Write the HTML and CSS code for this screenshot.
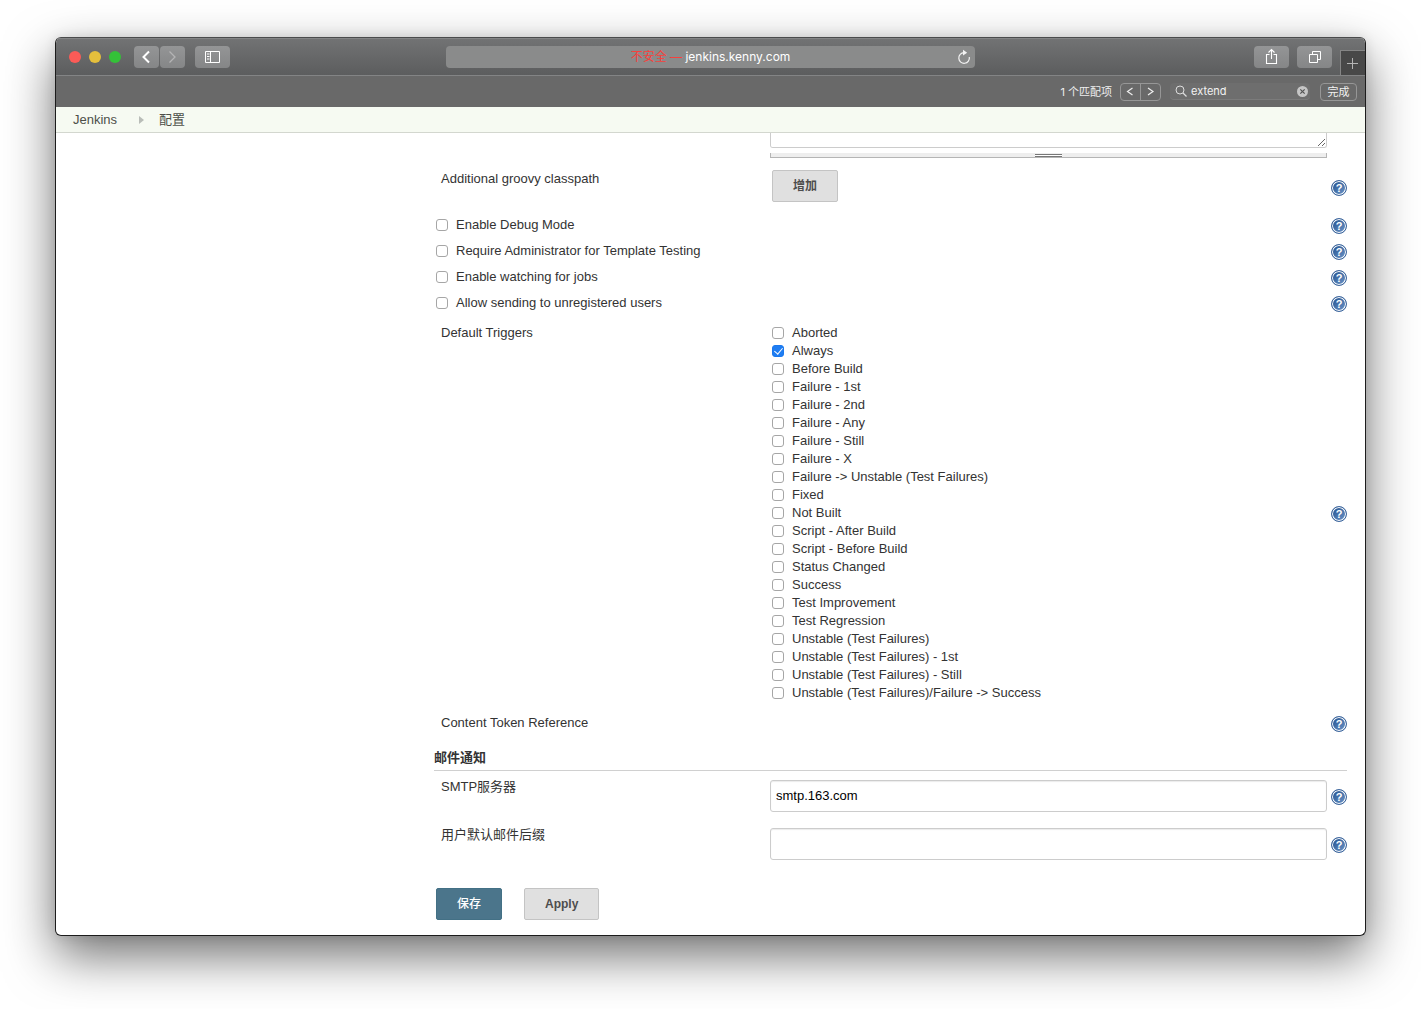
FILE: index.html
```html
<!DOCTYPE html>
<html lang="zh-CN">
<head>
<meta charset="utf-8">
<title>配置 [Jenkins]</title>
<meta name="viewport" content="width=device-width, initial-scale=1">
<link rel="stylesheet" href="styles.css">
</head>
<body>
<div class="window">
  <header class="toolbar">
    <div class="toolbar-side">
      <div class="lights">
        <span class="light light-close"></span>
        <span class="light light-min"></span>
        <span class="light light-max"></span>
      </div>
      <div class="nav">
        <button class="tool tool-nav" type="button" aria-label="后退">
          <svg width="24" height="22" viewBox="0 0 24 22"><path d="M15 5.500 9.500 11l5.500 5.500" fill="none" stroke="#fff" stroke-width="2"/></svg>
        </button>
        <button class="tool tool-nav" type="button" aria-label="前进">
          <svg width="24" height="22" viewBox="0 0 24 22"><path d="M9.500 5.500 15 11l-5.500 5.500" fill="none" stroke="#b4b4b5" stroke-width="1.300"/></svg>
        </button>
      </div>
      <button class="tool" type="button" aria-label="边栏">
        <svg width="35" height="22" viewBox="0 0 35 22"><path d="M10.500 5.500h14v11h-14zM15.500 5.500v11M12 8h2.500M12 10.500h2.500M12 13h2.500" fill="none" stroke="#fff"/></svg>
      </button>
    </div>
    <div class="address">
      <span class="address-text"><span class="insecure">不安全 —</span> jenkins.kenny.com</span>
      <button class="reload" type="button" aria-label="重新载入">
        <svg width="14" height="16" viewBox="0 0 14 16"><path d="M12.300 8A5.300 5.300 0 1 1 7 3.700" fill="none" stroke="#f2f2f2" stroke-width="1.200"/><path d="M6 .8 10.200 3.800 6 6.600z" fill="#f2f2f2"/></svg>
      </button>
    </div>
    <div class="toolbar-side toolbar-end">
      <button class="tool" type="button" aria-label="共享">
        <svg width="35" height="22" viewBox="0 0 35 22"><path d="M15.500 8.500h-3v9h10v-9h-3M17.500 13V4M14.500 6.500l3-3 3 3" fill="none" stroke="#fff" stroke-width="1.100"/></svg>
      </button>
      <button class="tool" type="button" aria-label="标签页概览">
        <svg width="35" height="22" viewBox="0 0 35 22"><path d="M12.500 8.500h8v8h-8zM15.500 8V5.500h8v8H21" fill="none" stroke="#fff"/></svg>
      </button>
      <button class="new-tab" type="button" aria-label="新建标签页">
        <svg width="23" height="24" viewBox="0 0 23 24"><path d="M6 12.500h11M11.500 7v11" stroke="#b5b5b5" fill="none"/></svg>
      </button>
    </div>
  </header>

  <div class="findbar">
    <span class="matches">1 个匹配项</span>
    <div class="find-steps">
      <button class="step" type="button" aria-label="上一个"><svg width="18" height="16" viewBox="0 0 18 16"><path d="M11.500 4 6.500 7.500l5 3.500" fill="none" stroke="#eee" stroke-width="1.200"/></svg></button>
      <button class="step" type="button" aria-label="下一个"><svg width="18" height="16" viewBox="0 0 18 16"><path d="M7 4l5 3.500-5 3.500" fill="none" stroke="#eee" stroke-width="1.200"/></svg></button>
    </div>
    <div class="find-field">
      <svg width="12" height="12" viewBox="0 0 12 12"><circle cx="5" cy="5" r="4" fill="none" stroke="#ddd"/><path d="M8 8l3.500 3.500" stroke="#ddd" stroke-width="1.200"/></svg>
      <input class="find-input" type="text" value="extend" aria-label="查找">
      <button class="clear" type="button" aria-label="清除"><svg width="11" height="11" viewBox="0 0 11 11"><circle cx="5.500" cy="5.500" r="5.500" fill="#c6c6c6"/><path d="M3.300 3.300l4.400 4.400M7.700 3.300 3.300 7.700" stroke="#555" stroke-width="1.200"/></svg></button>
    </div>
    <button class="done" type="button">完成</button>
  </div>

  <nav class="crumbs">
    <a class="crumb" href="#">Jenkins</a>
    <svg width="5" height="8" viewBox="0 0 5 8"><path d="M0 0l5 4-5 4z" fill="#b9bdb8"/></svg>
    <a class="crumb" href="#">配置</a>
  </nav>

  <main class="page">
    <form class="config">
      <div class="row">
        <div class="field script">
          <textarea class="script-box" aria-label="Default Pre-send Script"></textarea>
          <div class="grip-bar"><span class="grip"></span></div>
        </div>
      </div>
      <div class="row row-classpath">
        <span class="label">Additional groovy classpath</span>
        <div class="field field-inset"><button class="btn" type="button">增加</button></div>
        <a class="help" href="#" aria-label="帮助">?</a>
      </div>
      <div class="check-row"><label class="check"><input class="box" type="checkbox">Enable Debug Mode</label><a class="help" href="#" aria-label="帮助">?</a></div>
      <div class="check-row"><label class="check"><input class="box" type="checkbox">Require Administrator for Template Testing</label><a class="help" href="#" aria-label="帮助">?</a></div>
      <div class="check-row"><label class="check"><input class="box" type="checkbox">Enable watching for jobs</label><a class="help" href="#" aria-label="帮助">?</a></div>
      <div class="check-row"><label class="check"><input class="box" type="checkbox">Allow sending to unregistered users</label><a class="help" href="#" aria-label="帮助">?</a></div>
      <div class="row row-triggers">
        <span class="label" id="triggers">Default Triggers</span>
        <div class="field field-inset" role="group" aria-labelledby="triggers">
          <label class="check"><input class="box" type="checkbox">Aborted</label>
          <label class="check"><input class="box" type="checkbox" checked>Always</label>
          <label class="check"><input class="box" type="checkbox">Before Build</label>
          <label class="check"><input class="box" type="checkbox">Failure - 1st</label>
          <label class="check"><input class="box" type="checkbox">Failure - 2nd</label>
          <label class="check"><input class="box" type="checkbox">Failure - Any</label>
          <label class="check"><input class="box" type="checkbox">Failure - Still</label>
          <label class="check"><input class="box" type="checkbox">Failure - X</label>
          <label class="check"><input class="box" type="checkbox">Failure -&gt; Unstable (Test Failures)</label>
          <label class="check"><input class="box" type="checkbox">Fixed</label>
          <label class="check"><input class="box" type="checkbox">Not Built</label>
          <label class="check"><input class="box" type="checkbox">Script - After Build</label>
          <label class="check"><input class="box" type="checkbox">Script - Before Build</label>
          <label class="check"><input class="box" type="checkbox">Status Changed</label>
          <label class="check"><input class="box" type="checkbox">Success</label>
          <label class="check"><input class="box" type="checkbox">Test Improvement</label>
          <label class="check"><input class="box" type="checkbox">Test Regression</label>
          <label class="check"><input class="box" type="checkbox">Unstable (Test Failures)</label>
          <label class="check"><input class="box" type="checkbox">Unstable (Test Failures) - 1st</label>
          <label class="check"><input class="box" type="checkbox">Unstable (Test Failures) - Still</label>
          <label class="check"><input class="box" type="checkbox">Unstable (Test Failures)/Failure -&gt; Success</label>
        </div>
        <a class="help" href="#" aria-label="帮助">?</a>
      </div>
      <div class="row row-token">
        <span class="label">Content Token Reference</span>
        <a class="help" href="#" aria-label="帮助">?</a>
      </div>
      <h2 class="section">邮件通知</h2>
      <div class="row row-input">
        <label class="label" for="smtp">SMTP服务器</label>
        <input class="field text" id="smtp" type="text" value="smtp.163.com">
        <a class="help" href="#" aria-label="帮助">?</a>
      </div>
      <div class="row row-input">
        <label class="label" for="suffix">用户默认邮件后缀</label>
        <input class="field text" id="suffix" type="text">
        <a class="help" href="#" aria-label="帮助">?</a>
      </div>
      <div class="actions">
        <button class="btn btn-primary" type="submit">保存</button>
        <button class="btn" type="button">Apply</button>
      </div>
    </form>
  </main>
</div>
</body>
</html>
```
FILE: styles.css
```css
* { box-sizing: border-box; }

body {
  margin: 0;
  padding: 37px 55px 73px;
  background: #fff;
  color: #333;
  font: 13px/18px "Liberation Sans", "Noto Sans CJK SC", sans-serif;
}

button, input, textarea { font: inherit; margin: 0; }
button { padding: 0; border: 0; background: none; }
svg { display: block; flex: none; }

.window {
  border: 1px solid #1c1c1c;
  border-top-color: #4a4b4c;
  border-radius: 6px;
  background: #fff;
  overflow: hidden;
  box-shadow: 0 20px 50px rgba(0, 0, 0, .56), 0 0 12px rgba(0, 0, 0, .1);
}

/* Browser toolbar */
.toolbar {
  display: grid;
  grid-template-columns: 1fr minmax(0, 529px) 1fr;
  height: 38px;
  padding-top: 8px;
  background: linear-gradient(#727374, #5c5d5e);
  border-bottom: 1px solid #838485;
  box-shadow: inset 0 1px #838485;
  font-family: Inter, "Noto Sans CJK SC", sans-serif;
  font-size: 12px;
}
.toolbar-side { display: flex; align-items: flex-start; }
.toolbar-end { justify-content: flex-end; gap: 8px; }
.lights { display: flex; gap: 8px; padding: 5px 13px; }
.light { width: 12px; height: 12px; border-radius: 50%; }
.light-close { background: #fc5b57; }
.light-min { background: #e5bf3c; }
.light-max { background: #34c138; }
.nav { display: flex; gap: 1px; margin-right: 10px; }
.tool {
  width: 35px;
  height: 22px;
  border-radius: 4px;
  background: linear-gradient(#949596, #858687);
}
.tool-nav { width: 25px; }
.new-tab {
  align-self: flex-end;
  width: 25px;
  height: 25px;
  border: 1px solid #858585;
  border-width: 1px 0 0 1px;
  background: #484848;
}
.address {
  display: flex;
  align-items: center;
  height: 22px;
  padding: 0 4px 0 18px;
  border-radius: 4px;
  background: #8a8b8b;
  color: #fff;
}
.address-text { flex: 1; text-align: center; }
.insecure { color: #f8403c; }

/* Find bar */
.findbar {
  display: flex;
  align-items: center;
  justify-content: flex-end;
  height: 31px;
  padding-right: 8px;
  background: #696969;
  color: #eee;
  font: 11px/16px Inter, "Noto Sans CJK SC", sans-serif;
}
.find-steps {
  display: flex;
  height: 18px;
  margin: 0 9px 0 8px;
  border: 1px solid #969696;
  border-radius: 4px;
}
.step { width: 19px; }
.step + .step { width: 20px; border-left: 1px solid #969696; }
.find-field {
  display: flex;
  align-items: center;
  gap: 4px;
  width: 140px;
  height: 17px;
  margin-right: 10px;
  padding: 0 2px 0 5px;
  border-radius: 4px;
  background: #6e6e6e;
  border-bottom: 1px solid #7b7b7b;
}
.find-input {
  flex: 1;
  min-width: 0;
  padding: 0;
  border: 0;
  background: none;
  color: #f2f2f2;
}
.done {
  width: 37px;
  height: 18px;
  border: 1px solid #969696;
  border-radius: 4px;
  color: #f2f2f2;
}

/* Breadcrumbs */
.crumbs {
  display: flex;
  align-items: center;
  height: 26px;
  padding: 0 17px;
  background: #f6faf2;
  border-bottom: 1px solid #d3d7cf;
}
.crumbs svg { margin: 0 15px 0 22px; }
.crumb { color: #4d4f49; text-decoration: none; }

/* Configuration form */
.page { padding: 0 18px 15px 378px; }
.row {
  display: grid;
  grid-template-columns: 336px minmax(0, 1fr) 20px;
}
.label { grid-column: 1; padding-left: 7px; }
.field { grid-column: 2; }
.field-inset { padding-left: 2px; }
.row-classpath { height: 34px; margin-top: 12px; margin-bottom: 8px; }
.row-triggers { margin: 8px 0 12px; }
.row-input { height: 32px; margin-bottom: 16px; }
.row-input .label { margin-top: -2px; }

.script-box {
  display: block;
  width: 100%;
  height: 15px;
  padding: 0;
  border: 1px solid #ccc;
  border-top: 0;
  border-radius: 0 0 3px 3px;
}
.grip-bar {
  display: flex;
  justify-content: center;
  height: 5px;
  margin-top: 5px;
  border: 1px solid #b5b5b5;
  border-top: 0;
  background: #eee;
}
.grip {
  width: 27px;
  height: 3px;
  margin-top: 1px;
  border: 1px solid #777;
  border-width: 1px 0;
  background: #fff;
}

.check { display: flex; align-items: center; gap: 8px; }
.check-row {
  display: flex;
  align-items: center;
  justify-content: space-between;
  height: 26px;
  padding-left: 2px;
}
.box {
  appearance: none;
  width: 12px;
  height: 12px;
  border: 1px solid #a6a6a6;
  border-radius: 3px;
  background: #fff;
}
.box:checked {
  border-color: #1a78ee;
  background: #1f7df2;
  display: grid;
  place-items: center;
}
.box:checked::before {
  content: "";
  width: 4px;
  height: 7px;
  border: solid #fff;
  border-width: 0 1px 1px 0;
  transform: translateY(-1px) rotate(40deg);
}

.help {
  grid-column: 3;
  justify-self: end;
  align-self: center;
  width: 16px;
  height: 16px;
  margin-top: 2px;
  border: 1px solid #3c659c;
  border-radius: 50%;
  background: linear-gradient(135deg, #1f4e8c, #6f98ca);
  box-shadow: inset 0 0 0 1px #fff;
  color: #fff;
  font-size: 11px;
  font-weight: bold;
  line-height: 14px;
  text-align: center;
  text-decoration: none;
}

.section {
  margin: 17px 0 9px;
  padding-bottom: 3px;
  border-bottom: 1px solid #d0d0d0;
  font-size: 13px;
  line-height: 18px;
}
.text {
  width: 100%;
  padding: 0 5px;
  border: 1px solid #ccc;
  border-radius: 3px;
  box-shadow: inset 0 1px 1px rgba(0, 0, 0, .08);
  color: #000;
}

.btn {
  height: 32px;
  padding: 0 20px;
  border: 1px solid #c4c4c4;
  border-radius: 2px;
  background: #e0e0e0;
  color: #4d4d4d;
  font-size: 12px;
  font-weight: bold;
}
.btn-primary { background: #4b758b; border-color: #437085; color: #fff; font-weight: 500; }
.actions { display: flex; gap: 22px; padding: 12px 0 0 2px; }
```
